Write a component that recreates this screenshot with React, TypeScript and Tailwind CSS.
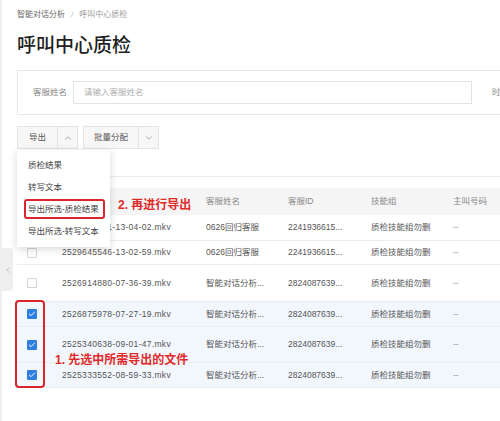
import { ChevronDown, ChevronUp, ChevronLeft, Check } from "lucide-react";

const rows = [
  { file: "2528888821-13-04-02.mkv", name: "0626回归客服", id: "2241936615...", h: "h-[26px]", checked: false },
  { file: "2529645546-13-02-59.mkv", name: "0626回归客服", id: "2241936615...", h: "h-[24px]", checked: false },
  { file: "2526914880-07-36-39.mkv", name: "智能对话分析...", id: "2824087639...", h: "h-[37px]", checked: false },
  { file: "2526875978-07-27-19.mkv", name: "智能对话分析...", id: "2824087639...", h: "h-[25px]", checked: true },
  { file: "2525340638-09-01-47.mkv", name: "智能对话分析...", id: "2824087639...", h: "h-[36px]", checked: true },
  { file: "2525333552-08-59-33.mkv", name: "智能对话分析...", id: "2824087639...", h: "h-[25px]", checked: true },
];

const exportItems = ["质检结果", "转写文本", "导出所选-质检结果", "导出所选-转写文本"];

function Checkbox({ checked }: { checked: boolean }) {
  if (checked) {
    return (
      <span className="flex h-[10px] w-[10px] items-center justify-center rounded-[1px] bg-[#2f7fdf]">
        <Check className="h-[8px] w-[8px] text-white" strokeWidth={3} />
      </span>
    );
  }
  return <span className="block h-[10px] w-[10px] rounded-[1px] border border-[#d4d4d4] bg-white" />;
}

const cols = "grid grid-cols-[45px_144px_82px_83px_82px_1fr] items-center";

export default function App() {
  return (
    <div className="relative h-[421px] w-[500px] overflow-hidden border-l-2 border-[#eeeeee] bg-white font-['Liberation_Sans','Noto_Sans_CJK_SC',sans-serif]">
      <div className="pl-[15px] pt-[9px]">
        {/* breadcrumb */}
        <div className="flex h-[12px] items-center gap-[6px] text-[8px] leading-none">
          <span className="text-[#666666]">智能对话分析</span>
          <span className="text-[#bbbbbb]">/</span>
          <span className="text-[#9a9a9a]">呼叫中心质检</span>
        </div>
        <h1 className="mt-[13px] text-[19px] font-medium leading-[24px] text-[#1f1f1f]">呼叫中心质检</h1>

        {/* search card */}
        <div className="mt-[12px] flex h-[45px] w-[520px] items-center border border-[#e8e8e8] pl-[15px]">
          <span className="text-[8.5px] text-[#888888]">客服姓名</span>
          <div className="ml-[6px] flex h-[23px] w-[399px] items-center border border-[#e3e3e3] pl-[10px] text-[8.5px] text-[#b0b0b0]">
            请输入客服姓名
          </div>
          <span className="ml-[20px] text-[8.5px] text-[#888888]">时间</span>
        </div>

        {/* toolbar */}
        <div className="mt-[11px] flex h-[23px] gap-[5px] text-[8.5px] text-[#555555]">
          <div className="flex border border-[#e3e3e3] bg-[#f7f7f7]">
            <span className="flex w-[39px] items-center justify-center">导出</span>
            <span className="flex w-[20px] items-center justify-center border-l border-[#e3e3e3]">
              <ChevronUp className="h-[10px] w-[10px] text-[#777777]" strokeWidth={1.5} />
            </span>
          </div>
          <div className="flex border border-[#e3e3e3] bg-[#f7f7f7]">
            <span className="flex w-[54px] items-center justify-center">批量分配</span>
            <span className="flex w-[20px] items-center justify-center border-l border-[#e3e3e3]">
              <ChevronDown className="h-[10px] w-[10px] text-[#777777]" strokeWidth={1.5} />
            </span>
          </div>
        </div>

        <div className="mt-[27px] h-px bg-[#ececec]" />

        {/* table */}
        <div className="mt-[11px] text-[8.5px]">
          <div className={`${cols} h-[27px] bg-[#f5f5f5] text-[#8a8a8a]`}>
            <span className="pl-[10px]">
              <Checkbox checked={false} />
            </span>
            <span>文件名称</span>
            <span>客服姓名</span>
            <span>客服ID</span>
            <span>技能组</span>
            <span>主叫号码</span>
          </div>
          {rows.map((r) => (
            <div
              key={r.file}
              className={`${cols} ${r.h} border-b border-[#ececec] text-[#555555] ${r.checked ? "bg-[#f2f7fd]" : "bg-white"}`}
            >
              <span className="pl-[10px]">
                <Checkbox checked={r.checked} />
              </span>
              <span className="tracking-[0.3px]">{r.file}</span>
              <span className="whitespace-nowrap">{r.name}</span>
              <span>{r.id}</span>
              <span>质检技能组勿删</span>
              <span className="text-[#999999]">--</span>
            </div>
          ))}
        </div>
      </div>

      {/* export dropdown */}
      <div className="absolute left-[15px] top-[150px] w-[93px] bg-white pb-[5px] pt-[4px] text-[8.5px] text-[#444444] shadow-[0_2px_8px_rgba(0,0,0,0.16)]">
        {exportItems.map((t) => (
          <div key={t} className="flex h-[22px] items-center pl-[11px]">
            {t}
          </div>
        ))}
        <div className="absolute left-[7px] top-[49px] h-[20px] w-[81px] rounded-[3px] border-2 border-[#d9252e]" />
      </div>

      {/* annotations */}
      <span className="absolute left-[116px] top-[197px] text-[12px] font-bold leading-[16px] text-[#e02a2a]">2. 再进行导出</span>
      <div className="absolute left-[13px] top-[300px] h-[88px] w-[30px] rounded-[4px] border-2 border-[#d9252e]" />
      <span className="absolute left-[53px] top-[352px] text-[12px] font-bold leading-[16px] text-[#e02a2a]">1. 先选中所需导出的文件</span>

      {/* sidebar collapse tab */}
      <div className="absolute left-0 top-[248px] flex h-[43px] w-[11px] items-center justify-center rounded-r-[3px] bg-[#eeeeee]">
        <ChevronLeft className="h-[10px] w-[10px] text-[#aaaaaa]" strokeWidth={1.5} />
      </div>
    </div>
  );
}
